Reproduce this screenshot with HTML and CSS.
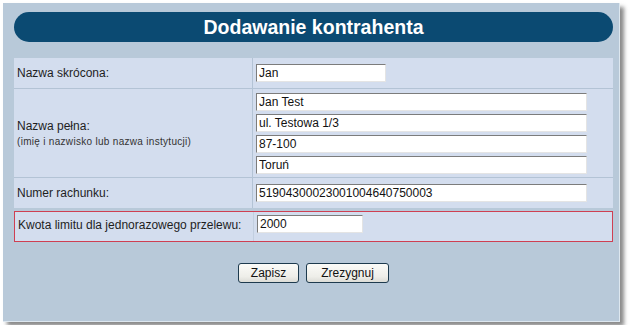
FILE: index.html
```html
<!DOCTYPE html>
<html lang="pl">
<head>
    <meta charset="UTF-8">
    <title>Dodawanie kontrahenta</title>
    <link rel="stylesheet" href="styles.css">
</head>
<body>
    <div class="panel">
        <h1 class="title">Dodawanie kontrahenta</h1>

        <div class="form-grid">
            <div class="cell label">Nazwa skrócona:</div>
            <div class="cell value">
                <input type="text" class="input input-short" value="Jan">
            </div>

            <div class="cell label">
                <div>Nazwa pełna:</div>
                <div class="hint">(imię i nazwisko lub nazwa instytucji)</div>
            </div>
            <div class="cell value stack">
                <input type="text" class="input input-long" value="Jan Test">
                <input type="text" class="input input-long" value="ul. Testowa 1/3">
                <input type="text" class="input input-long" value="87-100">
                <input type="text" class="input input-long" value="Toruń">
            </div>

            <div class="cell label">Numer rachunku:</div>
            <div class="cell value">
                <input type="text" class="input input-long" value="51904300023001004640750003">
            </div>
        </div>

        <!-- pole z limitem wyróżnione ramką -->
        <div class="form-grid limit-row">
            <div class="cell label">Kwota limitu dla jednorazowego przelewu:</div>
            <div class="cell value">
                <input type="text" class="input input-limit" value="2000">
            </div>
        </div>

        <div class="button-group">
            <button class="btn">Zapisz</button>
            <button class="btn btn-wide">Zrezygnuj</button>
        </div>
    </div>
</body>
</html>
```

FILE: styles.css
```css
* {
    margin: 0;
    padding: 0;
    box-sizing: border-box;
}

body {
    font-family: "Liberation Sans", Arial, sans-serif;
    font-size: 12px;
    color: #1a1a1a;
    background: #ffffff;
}

.panel {
    margin: 3px;
    width: 617px;
    height: 319px;
    padding: 9px 6px 0 11px;
    background: #b8c9d9;
    border-right: 1px solid #dde7ef;
    border-bottom: 1px solid #dde7ef;
    box-shadow: 4px 4px 4px rgba(40, 40, 40, 0.55);
}

.title {
    height: 30px;
    line-height: 30px;
    border-radius: 15px;
    background: #0b4a72;
    color: #ffffff;
    font-size: 19.5px;
    font-weight: bold;
    text-align: center;
}

.form-grid {
    margin-top: 16px;
    display: grid;
    grid-template-columns: 238px 1fr;
    gap: 1px;
    background: #b3c3d5;
}

.cell {
    background: #d3ddee;
    display: flex;
    flex-direction: column;
    justify-content: center;
}

.label {
    padding: 0 3px;
    color: #1e1e1e;
}

.hint {
    margin-top: 3px;
    font-size: 10px;
    letter-spacing: 0.3px;
    color: #333333;
}

.value {
    padding: 6px 3px 6px 3px;
}

.stack {
    padding: 4px 3px 3px 3px;
    gap: 3px;
}

.input {
    height: 18px;
    padding: 0 2px;
    font-family: "Liberation Sans", Arial, sans-serif;
    font-size: 12px;
    color: #111111;
    background: #ffffff;
    border: 1px solid #e4e4e4;
    border-top-color: #7c7c7c;
    border-left-color: #7c7c7c;
    outline: none;
}

.input-short {
    width: 130px;
}

.input-long {
    width: 331px;
}

.input-limit {
    width: 106px;
}

.limit-row {
    margin-top: 3px;
    border: 1px solid #cf3f52;
    background: #c2cfe0;
}

.limit-row .value {
    padding: 3px 3px 8px 3px;
}

.limit-row .label {
    padding-bottom: 4px;
}

.button-group {
    margin-top: 21px;
    display: flex;
    justify-content: center;
    gap: 7px;
}

.btn {
    width: 61px;
    height: 20px;
    font-family: "Liberation Sans", Arial, sans-serif;
    font-size: 12px;
    color: #111111;
    background: linear-gradient(180deg, #fbfbf8 0%, #eeeee9 70%, #dcdcd6 100%);
    border: 1px solid #1d3a4e;
    border-radius: 3px;
}

.btn-wide {
    width: 83px;
}
```
